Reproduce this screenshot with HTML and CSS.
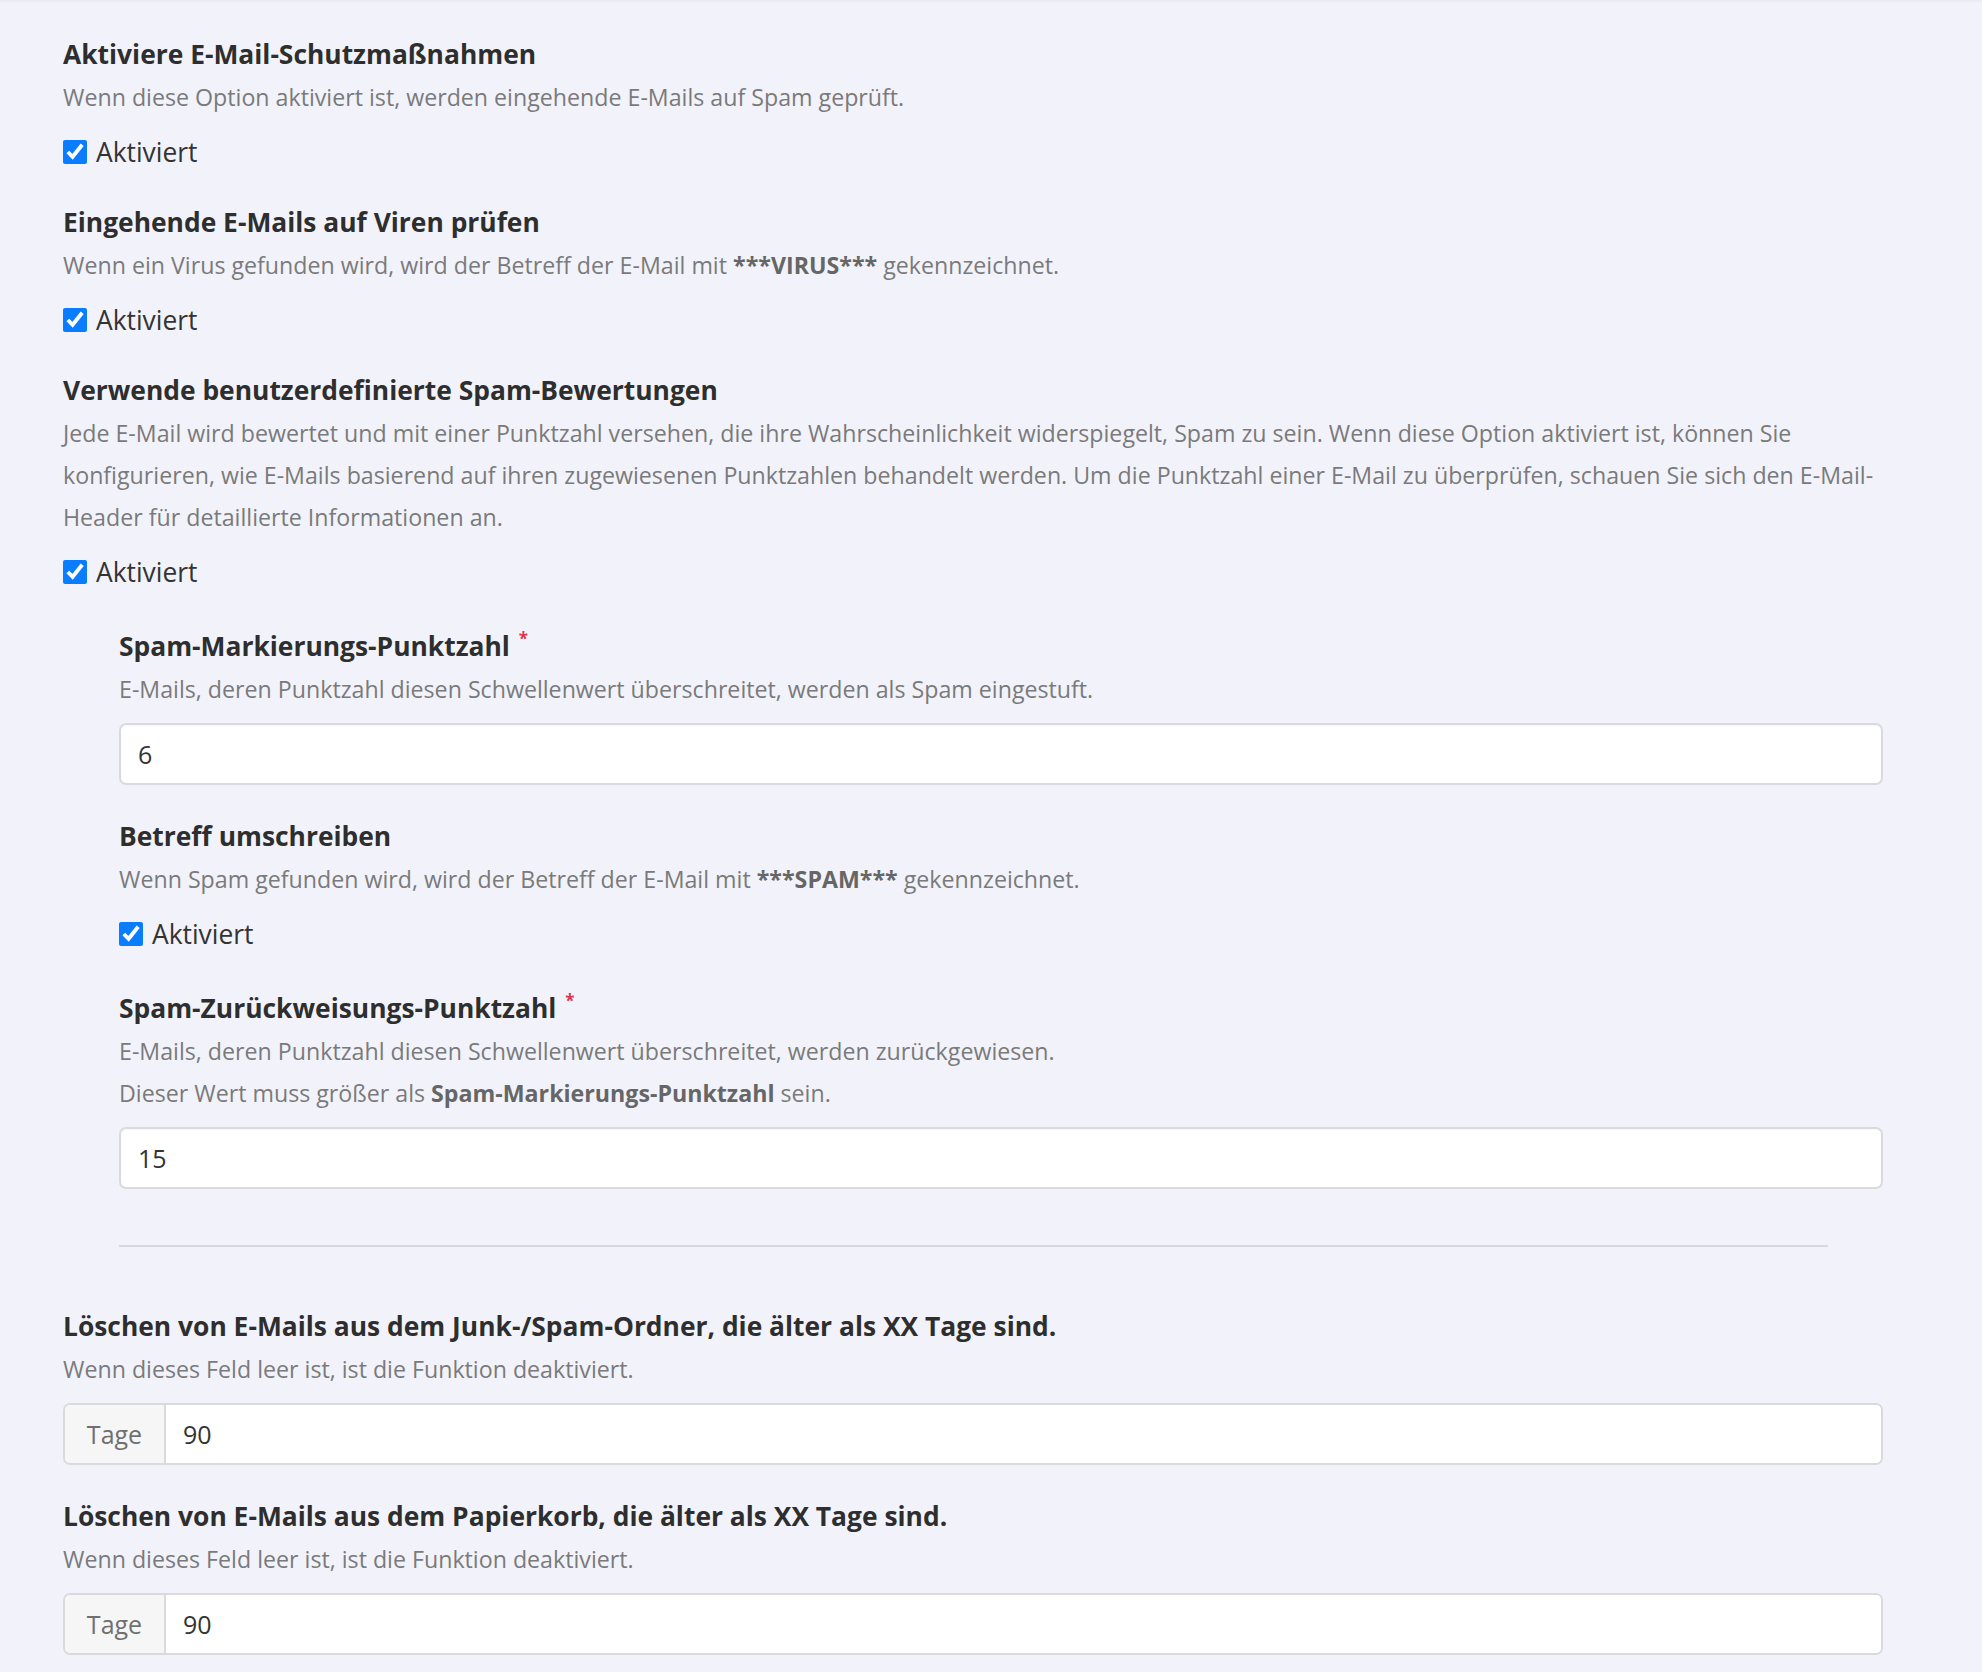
FILE: index.html
```html
<!DOCTYPE html>
<html lang="de">
  <head>
    <meta charset="UTF-8" />
    <title>E-Mail-Schutz</title>
    <link rel="stylesheet" href="styles.css">
  </head>
  <body>
    <main class="settings">
      <section class="field">
        <h3 class="field-title">Aktiviere E-Mail-Schutzmaßnahmen</h3>
        <p class="field-desc">Wenn diese Option aktiviert ist, werden eingehende E-Mails auf Spam geprüft.</p>
        <label class="check"><input type="checkbox" checked /> Aktiviert</label>
      </section>

      <section class="field">
        <h3 class="field-title">Eingehende E-Mails auf Viren prüfen</h3>
        <p class="field-desc">Wenn ein Virus gefunden wird, wird der Betreff der E-Mail mit <b>***VIRUS***</b> gekennzeichnet.</p>
        <label class="check"><input type="checkbox" checked /> Aktiviert</label>
      </section>

      <section class="field">
        <h3 class="field-title">Verwende benutzerdefinierte Spam-Bewertungen</h3>
        <p class="field-desc">Jede E-Mail wird bewertet und mit einer Punktzahl versehen, die ihre Wahrscheinlichkeit widerspiegelt, Spam zu sein. Wenn diese Option aktiviert ist, können Sie konfigurieren, wie E-Mails basierend auf ihren zugewiesenen Punktzahlen behandelt werden. Um die Punktzahl einer E-Mail zu überprüfen, schauen Sie sich den E-Mail-Header für detaillierte Informationen an.</p>
        <label class="check"><input type="checkbox" checked /> Aktiviert</label>

        <div class="subfields">
          <section class="field">
            <h3 class="field-title">Spam-Markierungs-Punktzahl <span class="required">*</span></h3>
            <p class="field-desc">E-Mails, deren Punktzahl diesen Schwellenwert überschreitet, werden als Spam eingestuft.</p>
            <input class="text-input" type="text" value="6" />
          </section>

          <section class="field">
            <h3 class="field-title">Betreff umschreiben</h3>
            <p class="field-desc">Wenn Spam gefunden wird, wird der Betreff der E-Mail mit <b>***SPAM***</b> gekennzeichnet.</p>
            <label class="check"><input type="checkbox" checked /> Aktiviert</label>
          </section>

          <section class="field">
            <h3 class="field-title">Spam-Zurückweisungs-Punktzahl <span class="required">*</span></h3>
            <p class="field-desc">E-Mails, deren Punktzahl diesen Schwellenwert überschreitet, werden zurückgewiesen.<br />Dieser Wert muss größer als <b>Spam-Markierungs-Punktzahl</b> sein.</p>
            <input class="text-input" type="text" value="15" />
          </section>

          <hr class="divider" />
        </div>
      </section>

      <section class="field field-after-divider">
        <h3 class="field-title">Löschen von E-Mails aus dem Junk-/Spam-Ordner, die älter als XX Tage sind.</h3>
        <p class="field-desc">Wenn dieses Feld leer ist, ist die Funktion deaktiviert.</p>
        <div class="input-group">
          <span class="input-prefix">Tage</span>
          <input class="text-input" type="text" value="90" />
        </div>
      </section>

      <section class="field">
        <h3 class="field-title">Löschen von E-Mails aus dem Papierkorb, die älter als XX Tage sind.</h3>
        <p class="field-desc">Wenn dieses Feld leer ist, ist die Funktion deaktiviert.</p>
        <div class="input-group">
          <span class="input-prefix">Tage</span>
          <input class="text-input" type="text" value="90" />
        </div>
      </section>
    </main>
  </body>
</html>
```

FILE: styles.css
```css
html,
body {
  margin: 0;
  background: #f2f3fa;
}

body {
  font-family: 'Open Sans', 'Liberation Sans', sans-serif;
  color: #333;
  box-shadow: inset 0 3px 3px -2px rgba(0, 0, 0, 0.06);
}

.settings {
  padding: 36px 99px 20px 63px;
}

.field + .field {
  margin-top: 33px;
}

.field + .field-after-divider {
  margin-top: 61px;
}

.field-title {
  margin: 0;
  font-size: 26.4px;
  font-weight: 700;
  line-height: 36px;
  color: #2e2e2e;
}

.required {
  position: relative;
  top: 2px;
  margin-left: 2px;
  font-size: 17px;
  line-height: 1;
  vertical-align: top;
  color: #e0344c;
}

.field-desc {
  margin: 4px 0 0;
  font-size: 23.2px;
  line-height: 42px;
  color: #7a7a7a;
}

.field-desc b {
  color: #666;
}

.check {
  display: flex;
  align-items: center;
  height: 38px;
  margin-top: 15px;
  font-size: 26.4px;
  color: #333;
}

.check input {
  width: 24px;
  height: 24px;
  margin: 0 9px 0 0;
  accent-color: #0a7cff;
}

.subfields {
  margin: 37px 0 0 56px;
}

.subfields .check {
  margin-bottom: 37px;
}

.text-input {
  display: block;
  box-sizing: border-box;
  width: 100%;
  height: 62px;
  margin-top: 13px;
  padding: 0 17px;
  border: 2px solid #dadade;
  border-radius: 7px;
  font-family: inherit;
  font-size: 25px;
  color: #333;
  background: #fff;
  box-shadow: inset 0 1px 2px rgba(0, 0, 0, 0.04);
}

.divider {
  margin: 56px 55px 0 0;
  border: 0;
  border-top: 2px solid #d8d8de;
}

.input-group {
  display: flex;
  box-sizing: border-box;
  height: 62px;
  margin-top: 13px;
  border: 2px solid #dadade;
  border-radius: 7px;
  overflow: hidden;
  background: #fff;
}

.input-prefix {
  display: flex;
  align-items: center;
  justify-content: center;
  width: 99px;
  border-right: 2px solid #dadade;
  font-size: 25px;
  color: #707070;
  background: #f6f6f6;
}

.input-group .text-input {
  flex: 1;
  height: 100%;
  margin: 0;
  border: 0;
  border-radius: 0;
  box-shadow: none;
}
```
